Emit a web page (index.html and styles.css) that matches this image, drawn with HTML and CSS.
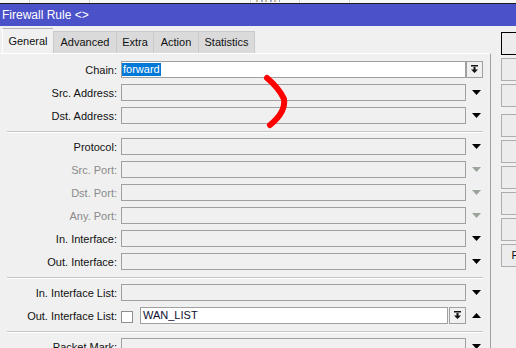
FILE: index.html
```html
<!DOCTYPE html>
<html lang="en">

<head>
    <meta charset="UTF-8" />
    <meta name="viewport" content="width=device-width, initial-scale=1.0" />
    <title>Firewall Rule</title>
    <link rel="stylesheet" href="styles.css">
</head>

<body>
    <div class="strip">
        <div class="col c1"></div>
        <div class="col c2"></div>
        <div class="col c3"></div>
        <div class="col c4"><span class="marks"></span></div>
        <div class="col c5"></div>
    </div>
    <div class="titlebar">Firewall Rule &lt;&gt;</div>

    <div class="window">
        <div class="main">
            <div class="tabs">
                <div class="tab active w-general">General</div>
                <div class="tab w-advanced">Advanced</div>
                <div class="tab w-extra">Extra</div>
                <div class="tab w-action">Action</div>
                <div class="tab w-stats">Statistics</div>
            </div>
            <div class="panel">
                <div class="row">
                    <span class="lbl">Chain:</span>
                    <div class="field white"><span class="sel">forward</span></div>
                    <div class="drop">
                        <svg width="9" height="9" viewBox="0 0 9 9"><rect x="1" y="0" width="7" height="1.5"/><rect x="3.5" y="2" width="2" height="3"/><polygon points="1,4.5 8,4.5 4.5,8"/></svg>
                    </div>
                </div>
                <div class="row">
                    <span class="lbl">Src. Address:</span>
                    <div class="field"></div>
                    <div class="arrow"><svg width="9" height="5"><polygon points="0,0 9,0 4.5,5"/></svg></div>
                </div>
                <div class="row">
                    <span class="lbl">Dst. Address:</span>
                    <div class="field"></div>
                    <div class="arrow"><svg width="9" height="5"><polygon points="0,0 9,0 4.5,5"/></svg></div>
                </div>
                <div class="sep"></div>
                <div class="row">
                    <span class="lbl">Protocol:</span>
                    <div class="field"></div>
                    <div class="arrow"><svg width="9" height="5"><polygon points="0,0 9,0 4.5,5"/></svg></div>
                </div>
                <div class="row">
                    <span class="lbl dim">Src. Port:</span>
                    <div class="field"></div>
                    <div class="arrow dim"><svg width="9" height="5"><polygon points="0,0 9,0 4.5,5"/></svg></div>
                </div>
                <div class="row">
                    <span class="lbl dim">Dst. Port:</span>
                    <div class="field"></div>
                    <div class="arrow dim"><svg width="9" height="5"><polygon points="0,0 9,0 4.5,5"/></svg></div>
                </div>
                <div class="row">
                    <span class="lbl dim">Any. Port:</span>
                    <div class="field"></div>
                    <div class="arrow dim"><svg width="9" height="5"><polygon points="0,0 9,0 4.5,5"/></svg></div>
                </div>
                <div class="row">
                    <span class="lbl">In. Interface:</span>
                    <div class="field"></div>
                    <div class="arrow"><svg width="9" height="5"><polygon points="0,0 9,0 4.5,5"/></svg></div>
                </div>
                <div class="row">
                    <span class="lbl">Out. Interface:</span>
                    <div class="field"></div>
                    <div class="arrow"><svg width="9" height="5"><polygon points="0,0 9,0 4.5,5"/></svg></div>
                </div>
                <div class="sep"></div>
                <div class="row">
                    <span class="lbl">In. Interface List:</span>
                    <div class="field"></div>
                    <div class="arrow"><svg width="9" height="5"><polygon points="0,0 9,0 4.5,5"/></svg></div>
                </div>
                <div class="row">
                    <span class="lbl">Out. Interface List:</span>
                    <span class="check"></span>
                    <div class="field white short"><span class="value">WAN_LIST</span></div>
                    <div class="drop inline">
                        <svg width="9" height="9" viewBox="0 0 9 9"><rect x="1" y="0" width="7" height="1.5"/><rect x="3.5" y="2" width="2" height="3"/><polygon points="1,4.5 8,4.5 4.5,8"/></svg>
                    </div>
                    <div class="arrow"><svg width="9" height="5"><polygon points="0,5 9,5 4.5,0"/></svg></div>
                </div>
                <div class="sep"></div>
                <div class="row">
                    <span class="lbl">Packet Mark:</span>
                    <div class="field"></div>
                    <div class="arrow"><svg width="9" height="5"><polygon points="0,0 9,0 4.5,5"/></svg></div>
                </div>
            </div>
        </div>

        <div class="buttons">
            <div class="btn default">OK</div>
            <div class="btn">Cancel</div>
            <div class="btn">Apply</div>
            <div class="btn spaced">Disable</div>
            <div class="btn">Comment</div>
            <div class="btn">Copy</div>
            <div class="btn">Remove</div>
            <div class="btn">Reset Counters</div>
            <div class="btn">Reset All Counters</div>
        </div>
    </div>

    <!-- hand drawn mark over the screenshot -->
    <svg class="scribble" width="516" height="348" viewBox="0 0 516 348">
        <path d="M267 78 Q279 88 284 99 Q286 112 270 125" />
    </svg>
</body>

</html>
```

FILE: styles.css
```css
* {
    box-sizing: border-box;
}

body,
html {
    height: 100%;
    margin: 0;
    padding: 0;
    overflow: hidden;
    background-color: #f0f0f0;
    font-family: "Liberation Sans", Arial, sans-serif;
    font-size: 11px;
    color: #111;
}

/* list window peeking out behind the dialog */
.strip {
    height: 4px;
    display: flex;
    background-color: #f7f7f7;
    border-bottom: 1px solid #1c1c1c;
}
.strip .col {
    height: 3px;
    border-right: 1px solid #d4d4d4;
}
.strip .c1 { width: 30px; }
.strip .c2 { width: 60px; }
.strip .c3 { width: 161px; }
.strip .c4 { width: 49px; }
.strip .c5 { width: 50px; }
.strip .marks {
    display: block;
    width: 24px;
    height: 2px;
    margin-left: 5px;
    background: repeating-linear-gradient(90deg, #c9b79a 0 2px, transparent 2px 5px, #9aa6cc 5px 7px, transparent 7px 9px);
}

.titlebar {
    height: 22px;
    line-height: 22px;
    padding-left: 2px;
    background-color: #4b51c9;
    color: #fff;
    font-size: 12px;
}

.window {
    display: flex;
    height: calc(100% - 26px);
}

.main {
    width: 491px;
    flex-shrink: 0;
    display: flex;
    flex-direction: column;
}

.tabs {
    height: 27px;
    flex-shrink: 0;
    display: flex;
    align-items: flex-end;
    padding-left: 2px;
}
.tab {
    height: 22px;
    line-height: 21px;
    text-align: center;
    background-color: #dadada;
    border-top: 1px solid #c9c9c9;
    border-left: 1px solid #c9c9c9;
    color: #111;
}
.tab:last-child {
    border-right: 1px solid #c9c9c9;
}
.tab.active {
    height: 25px;
    line-height: 24px;
    background-color: #f0f0f0;
    border-color: #b4b4b4;
    border-left: 1px solid #fff;
}
.w-general { width: 51px; }
.w-advanced { width: 63px; }
.w-extra { width: 37px; }
.w-action { width: 45px; }
.w-stats { width: 57px; }

.panel {
    flex: 1;
    display: flex;
    flex-direction: column;
    padding-top: 7px;
    border-top: 1px solid #fff;
    border-right: 1px solid #a0a0a0;
}

.row {
    display: flex;
    align-items: center;
    height: 17px;
    margin-bottom: 6px;
    flex-shrink: 0;
}
.lbl {
    width: 117px;
    margin-right: 4px;
    text-align: right;
    white-space: nowrap;
}
.lbl.dim {
    color: #8a8a8a;
}

.field {
    width: 345px;
    height: 17px;
    border: 1px solid #a0a0a0;
    background-color: #f0f0f0;
}
.field.white {
    background-color: #fff;
}
.field.short {
    width: 308px;
}
.field .sel {
    display: inline-block;
    margin-top: 1px;
    padding: 0 1px;
    line-height: 13px;
    background-color: #0078d7;
    color: #fff;
}
.field .value {
    display: inline-block;
    padding-left: 2px;
    line-height: 15px;
    color: #0d0d30;
}

.drop {
    width: 17px;
    height: 17px;
    display: flex;
    align-items: center;
    justify-content: center;
    border: 1px solid #a0a0a0;
    background-color: #f0f0f0;
}
.drop.inline {
    margin-left: 1px;
}
.drop svg {
    fill: #111;
}

.arrow {
    width: 17px;
    padding-left: 3px;
    display: flex;
    justify-content: center;
}
.arrow svg {
    fill: #000;
}
.arrow.dim svg {
    fill: #9ca39c;
}

.check {
    width: 12px;
    height: 12px;
    margin-top: 3px;
    margin-right: 7px;
    border: 1px solid #8f8f8f;
    background-color: #fff;
}

.sep {
    width: 476px;
    margin: 1px 0 5px 7px;
    border-top: 1px solid #c6c6c6;
    border-bottom: 1px solid #fff;
    flex-shrink: 0;
}

.buttons {
    flex-shrink: 0;
    margin-left: 10px;
    padding-top: 6px;
    display: flex;
    flex-direction: column;
    gap: 3px;
}
.btn {
    width: 112px;
    height: 23px;
    line-height: 21px;
    text-align: center;
    white-space: nowrap;
    border: 1px solid #adadad;
    background-color: #ececec;
    flex-shrink: 0;
}
.btn.default {
    border-color: #000;
}
.btn.spaced {
    margin-top: 4px;
}

.scribble {
    position: absolute;
    left: 0;
    top: 0;
    pointer-events: none;
}
.scribble path {
    fill: none;
    stroke: #ff0000;
    stroke-width: 6;
    stroke-linecap: round;
    stroke-linejoin: round;
}
```
